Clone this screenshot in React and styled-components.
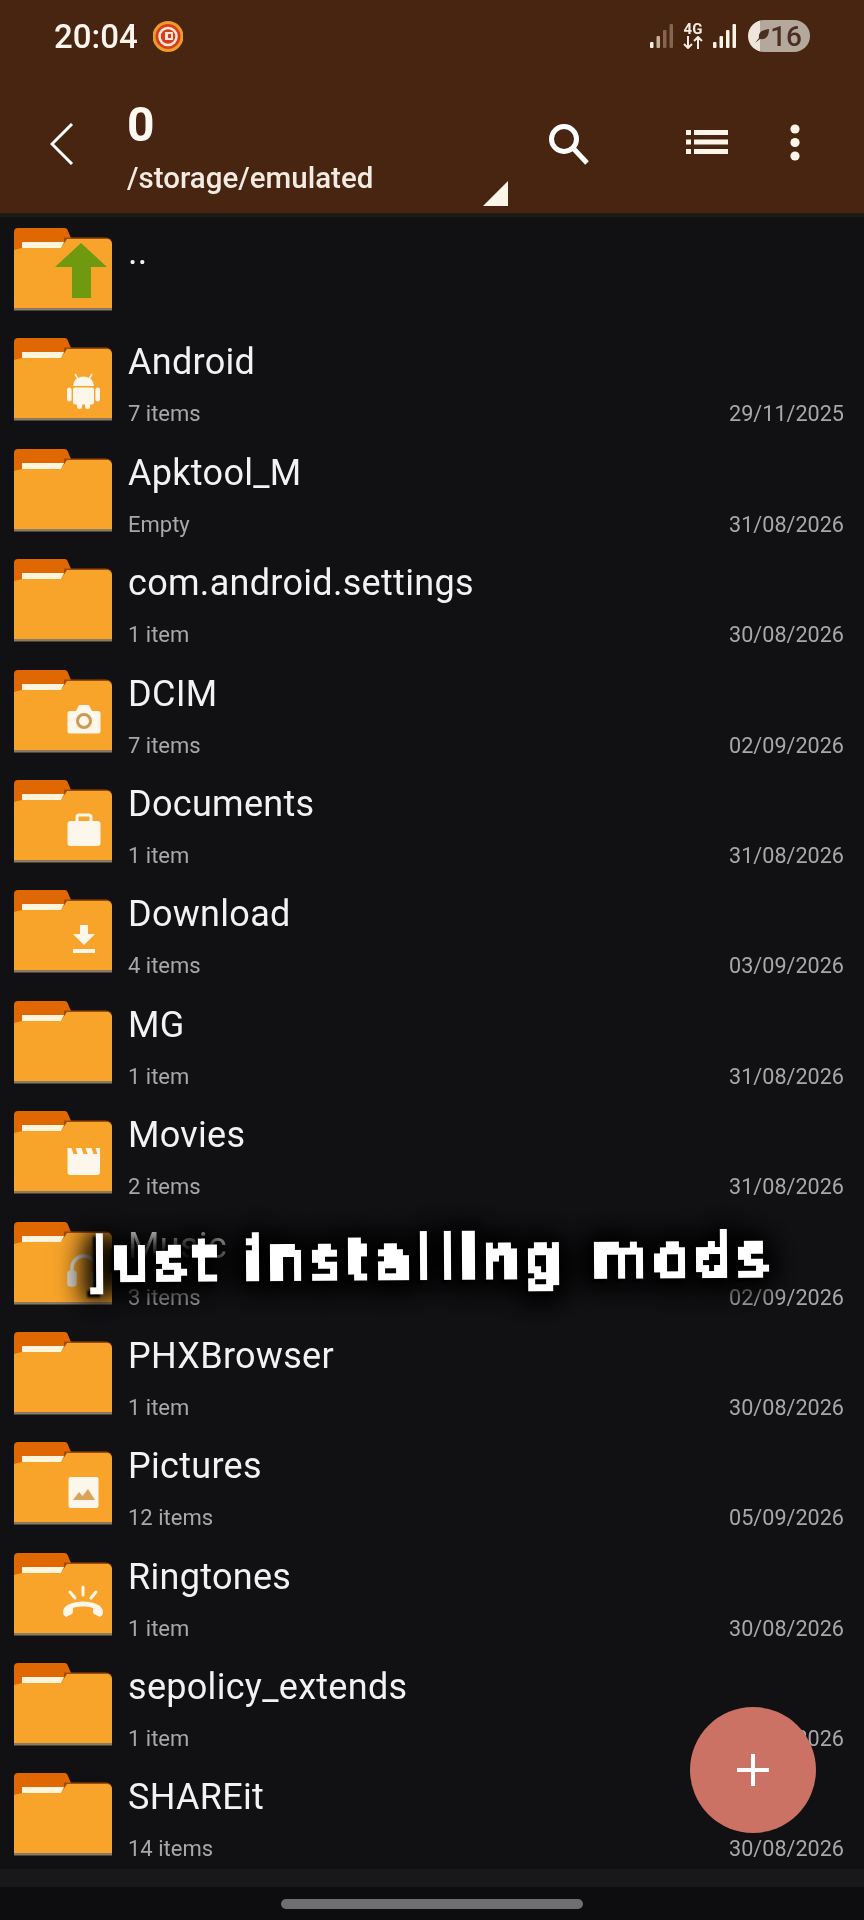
import React from "react";
import styled, { createGlobalStyle } from "styled-components";

const Global = createGlobalStyle`
  html, body { margin: 0; padding: 0; background: #111114; }
  body { font-family: Roboto, "Noto Sans", sans-serif; }
`;

const Screen = styled.div`
  position: relative;
  width: 864px;
  height: 1920px;
  overflow: hidden;
  display: flex;
  flex-direction: column;
  background: #111114;
  filter: blur(0.4px);
`;

const Header = styled.header`
  height: 213px;
  flex: none;
  background: #472511;
  color: #fff;
  display: flex;
  flex-direction: column;
  border-bottom: 4px solid #1d1a1a;
`;

const StatusBar = styled.div`
  height: 76px;
  display: flex;
  align-items: center;
  justify-content: space-between;
  padding: 0 54px 4px 54px;
  box-sizing: border-box;
`;

const StatusLeft = styled.div`
  display: flex;
  align-items: center;
  gap: 15px;
`;

const Clock = styled.span`
  font-size: 33px;
  font-weight: 500;
  color: #fbf5ee;
`;

const StatusRight = styled.div`
  display: flex;
  align-items: center;
  gap: 10px;
`;

const NetLabel = styled.div`
  width: 20px;
  display: flex;
  flex-direction: column;
  align-items: center;
  font-size: 15px;
  font-weight: 700;
  line-height: 13px;
  color: #f5ebdf;
`;

const Battery = styled.div`
  position: relative;
  width: 62px;
  height: 32px;
  border-radius: 16px;
  margin-left: 2px;
  background: linear-gradient(90deg, #efe6da 0 20%, #b4a79c 20% 100%);
  display: flex;
  align-items: center;
  justify-content: flex-end;
  gap: 1px;
  padding-right: 8px;
  box-sizing: border-box;
  color: #4b3020;
  font-size: 28px;
  font-weight: 500;
`;

const Toolbar = styled.div`
  flex: 1;
  display: flex;
  align-items: flex-start;
  position: relative;
`;

const BackSlot = styled.div`
  width: 127px;
  padding: 47px 0 0 50px;
  box-sizing: border-box;
  flex: none;
`;

const Titles = styled.div`
  flex: 1;
  display: flex;
  flex-direction: column;
`;

const Title = styled.div`
  font-size: 48px;
  font-weight: 700;
  line-height: 56px;
  margin-top: 21px;
  color: #fdf8f2;
`;

const Path = styled.div`
  font-size: 29.5px;
  font-weight: 500;
  line-height: 34px;
  margin-top: 8px;
  color: #f3ebe2;
`;

const Corner = styled.svg`
  position: absolute;
  left: 483px;
  top: 105px;
`;

const ActionSlot = styled.div`
  position: absolute;
  left: ${(p) => p.$left}px;
  top: ${(p) => p.$top}px;
  display: flex;
`;

const List = styled.main`
  flex: 1;
  min-height: 0;
  overflow: hidden;
  padding-top: 11px;
`;

const Row = styled.div`
  height: 110.4px;
  display: flex;
  align-items: flex-start;
  padding: 0 20px 0 14px;
  box-sizing: border-box;
`;

const FolderBox = styled.svg`
  flex: none;
  width: 99px;
  height: 83px;
  display: block;
`;

const RowText = styled.div`
  flex: 1;
  min-width: 0;
  margin-left: 15px;
  padding-top: 2px;
  display: flex;
  flex-direction: column;
`;

const Name = styled.div`
  font-size: 36px;
  line-height: 44px;
  letter-spacing: 0.3px;
  color: #f2f2f2;
`;

const Meta = styled.div`
  margin-top: 15px;
  display: flex;
  justify-content: space-between;
  font-size: 22px;
  line-height: 30px;
  color: #a8a8a8;
`;

const DateText = styled.span`
  font-size: 21.6px;
`;

const BottomBand = styled.div`
  height: 18px;
  flex: none;
  background: #18181b;
`;

const NavBar = styled.nav`
  height: 33px;
  flex: none;
  background: #0d0d0f;
  display: flex;
  align-items: center;
  justify-content: center;
`;

const HomePill = styled.div`
  width: 302px;
  height: 10px;
  border-radius: 5px;
  background: #6f6f6f;
`;

const Fab = styled.button`
  position: absolute;
  left: 690px;
  top: 1707px;
  width: 126px;
  height: 126px;
  padding: 0;
  border: 0;
  border-radius: 50%;
  background: #cc7265;
  display: flex;
  align-items: center;
  justify-content: center;
`;

const Caption = styled.div`
  position: absolute;
  left: 84px;
  top: 1213px;
  white-space: nowrap;
  font-family: "DejaVu Sans", sans-serif;
  font-weight: 400;
  font-size: 56px;
  letter-spacing: 6.8px;
  line-height: 84px;
  color: #fff;
  transform: rotate(-0.4deg);
  filter: drop-shadow(0 0 16px #000) drop-shadow(0 0 10px #000) drop-shadow(-3px 3px 1px #000);
`;

const CaptionInner = styled.span`
  filter: url(#pixelate);
  display: inline-block;
  padding: 4px 8px;
  -webkit-text-stroke: 3px #fff;
`;

const W = "#fdf6ea";

const badges = {
  up: <path d="M67 15 L93 39 H77 V70 H58 V39 H41 Z" fill="#6f9a10" />,
  android: (
    <g fill={W}>
      <path d="M59 48 a10.5 9.5 0 0 1 21 0 Z" />
      <path d="M61 36 l3 5 M78 36 l-3 5" stroke={W} strokeWidth="1.5" />
      <rect x="59" y="49.5" width="21" height="17" rx="2" />
      <rect x="53" y="49.5" width="4.6" height="14" rx="2.3" />
      <rect x="81.4" y="49.5" width="4.6" height="14" rx="2.3" />
      <rect x="63" y="62" width="5" height="9" rx="2.5" />
      <rect x="71" y="62" width="5" height="9" rx="2.5" />
    </g>
  ),
  camera: (
    <g>
      <path fill={W} d="M56 41 H62 L65 35 H75 L78 41 H84 a2.5 2.5 0 0 1 2.5 2.5 V61 a2.5 2.5 0 0 1 -2.5 2.5 H56 a2.5 2.5 0 0 1 -2.5 -2.5 V43.5 A2.5 2.5 0 0 1 56 41 Z" />
      <circle cx="70" cy="51" r="6.5" fill="none" stroke="#c89a55" strokeWidth="3" />
    </g>
  ),
  work: (
    <g>
      <rect x="53.5" y="41" width="33" height="25" rx="3" fill={W} />
      <path d="M63 41 V37 a2 2 0 0 1 2 -2 H75 a2 2 0 0 1 2 2 V41" fill="none" stroke={W} strokeWidth="3" />
    </g>
  ),
  download: (
    <g fill={W}>
      <path d="M66 35 H74 V44 H81 L70 55 L59 44 H66 Z" />
      <rect x="59" y="59" width="22" height="4" />
    </g>
  ),
  movie: (
    <path
      fill={W}
      d="M53.5 37 h4 l2 6 h4 l-2 -6 h6 l2 6 h4 l-2 -6 h6 l2 6 h4 l-2 -6 h4.5 V61 a3 3 0 0 1 -3 3 H56.5 a3 3 0 0 1 -3 -3 Z"
    />
  ),
  music: (
    <g fill="none" stroke="#e0ddd4" strokeWidth="3.5">
      <path d="M58 56 V46 a12 12 0 0 1 24 0 V56" />
      <rect x="55" y="50" width="6" height="13" rx="2" fill="#e0ddd4" />
      <rect x="79" y="50" width="6" height="13" rx="2" fill="#e0ddd4" />
    </g>
  ),
  picture: (
    <g>
      <rect x="54.5" y="35" width="30" height="31" rx="2" fill={W} />
      <path d="M59 58 L65 50 L68.5 54 L74 47 L81 58 Z" fill="#d9a35a" />
    </g>
  ),
  ringtone: (
    <g>
      <path fill={W} d="M49 59 c0 -14 40 -14 40 0 c0 2 -1 4 -3 5 l-6 -3 c-1 -1 -1 -2 -1 -6 c-6 -2 -14 -2 -20 0 c0 4 0 5 -1 6 l-6 3 c-2 -1 -3 -3 -3 -5 Z" />
      <path d="M69 34 V42 M56 39 L61 45 M82 39 L77 45" stroke={W} strokeWidth="3" strokeLinecap="round" />
    </g>
  ),
};

const Folder = ({ badge }) => (
  <FolderBox viewBox="0 0 99 83">
    <path d="M0 4 a4 4 0 0 1 4 -4 H50 a4 4 0 0 1 4 3 L57 10 H62 V26 H0 Z" fill="#e06803" />
    <path d="M50 9.5 H92 a6 6 0 0 1 6 6 V20 H50 Z" fill="#a14b0a" />
    <path d="M0 22 L8 20 H47 L53 11 H93 a5 5 0 0 1 5 5 V80 H0 Z" fill="#f8a42a" />
    <path d="M8 14 H50 L47 20 H8 Z" fill="#fff4dc" />
    <rect y="80" width="98" height="2.5" fill="#8b7a63" />
    {badge && badges[badge]}
  </FolderBox>
);

const rows = [
  { name: "..", badge: "up" },
  { name: "Android", sub: "7 items", date: "29/11/2025", badge: "android" },
  { name: "Apktool_M", sub: "Empty", date: "31/08/2026" },
  { name: "com.android.settings", sub: "1 item", date: "30/08/2026" },
  { name: "DCIM", sub: "7 items", date: "02/09/2026", badge: "camera" },
  { name: "Documents", sub: "1 item", date: "31/08/2026", badge: "work" },
  { name: "Download", sub: "4 items", date: "03/09/2026", badge: "download" },
  { name: "MG", sub: "1 item", date: "31/08/2026" },
  { name: "Movies", sub: "2 items", date: "31/08/2026", badge: "movie" },
  { name: "Music", sub: "3 items", date: "02/09/2026", badge: "music" },
  { name: "PHXBrowser", sub: "1 item", date: "30/08/2026" },
  { name: "Pictures", sub: "12 items", date: "05/09/2026", badge: "picture" },
  { name: "Ringtones", sub: "1 item", date: "30/08/2026", badge: "ringtone" },
  { name: "sepolicy_extends", sub: "1 item", date: "30/08/2026" },
  { name: "SHAREit", sub: "14 items", date: "30/08/2026" },
];

const Bars = ({ dim }) => (
  <svg width="23" height="24" viewBox="0 0 23 24">
    <rect x="0" y="18" width="3.5" height="6" rx="1" fill="#fbf3e8" />
    <rect x="6.5" y="12" width="3.5" height="12" rx="1" fill={dim ? "#c4b09a" : "#fbf3e8"} />
    <rect x="13" y="6" width="3.5" height="18" rx="1" fill={dim ? "#84654f" : "#fbf3e8"} />
    <rect x="19.5" y="0" width="3.5" height="24" rx="1" fill={dim ? "#84654f" : "#fbf3e8"} />
  </svg>
);

export default function App() {
  return (
    <Screen>
      <Global />
      <svg width="0" height="0" style={{ position: "absolute" }}>
        <filter id="pixelate" x="0" y="0" width="100%" height="100%" colorInterpolationFilters="sRGB">
          <feFlood x="3" y="3" width="1" height="1" floodColor="#fff" />
          <feComposite width="6" height="6" />
          <feTile result="grid" />
          <feComposite in="SourceGraphic" in2="grid" operator="in" />
          <feMorphology operator="dilate" radius="3" />
          <feComponentTransfer>
            <feFuncA type="discrete" tableValues="0 1 1 1" />
          </feComponentTransfer>
        </filter>
      </svg>
      <Header>
        <StatusBar>
          <StatusLeft>
            <Clock>20:04</Clock>
            <svg width="30" height="31" viewBox="0 0 30 31">
              <circle cx="15" cy="15.5" r="14" fill="#d4401c" stroke="#ee9a2c" strokeWidth="3" />
              <circle cx="15" cy="15.5" r="8.5" fill="none" stroke="#fbe6d8" strokeWidth="2.5" />
              <path d="M12 11 H20 V19 H12 Z M15 13 v4 h3 v-4 Z" fill="#fbe6d8" fillRule="evenodd" />
            </svg>
          </StatusLeft>
          <StatusRight>
            <Bars dim />
            <NetLabel>
              4G
              <svg width="20" height="13" viewBox="0 0 20 13" fill="none" stroke="#f5ebdf" strokeWidth="2">
                <path d="M5 0 V12 M1 8 L5 12 L9 8 M15 13 V1 M11 5 L15 1 L19 5" />
              </svg>
            </NetLabel>
            <Bars />
            <Battery>
              <svg width="16" height="16" viewBox="0 0 16 16" style={{ position: "absolute", left: 6, top: 8 }}>
                <path d="M1 15 L5 10 C4 4 9 2 15 1 C15 8 12 12 6 11 Z" fill="#4b3020" />
              </svg>
              16
            </Battery>
          </StatusRight>
        </StatusBar>
        <Toolbar>
          <BackSlot>
            <svg width="24" height="42" viewBox="0 0 24 42" fill="none" stroke="#fff" strokeWidth="3">
              <path d="M22 1 L2 21 L22 41" />
            </svg>
          </BackSlot>
          <Titles>
            <Title>0</Title>
            <Path>/storage/emulated</Path>
          </Titles>
          <ActionSlot $left={548} $top={47}>
            <svg width="42" height="42" viewBox="0 0 42 42" fill="none" stroke="#fff" strokeWidth="5">
              <circle cx="16" cy="16" r="12.5" />
              <path d="M25 25 L39 40" />
            </svg>
          </ActionSlot>
          <ActionSlot $left={686} $top={54}>
            <svg width="42" height="24" viewBox="0 0 42 24" fill="#fdf5ea">
              <rect x="0" y="0" width="5" height="5" />
              <rect x="0" y="9.5" width="5" height="5" />
              <rect x="0" y="19" width="5" height="5" />
              <rect x="8" y="0" width="34" height="5" />
              <rect x="8" y="9.5" width="34" height="5" />
              <rect x="8" y="19" width="34" height="5" />
            </svg>
          </ActionSlot>
          <ActionSlot $left={790} $top={48}>
            <svg width="10" height="37" viewBox="0 0 10 37" fill="#fdf5ea">
              <circle cx="5" cy="5" r="4.6" />
              <circle cx="5" cy="18.5" r="4.6" />
              <circle cx="5" cy="32" r="4.6" />
            </svg>
          </ActionSlot>
          <Corner width="25" height="25" viewBox="0 0 25 25">
            <path d="M25 0 V25 H0 Z" fill="#fdf5ea" />
          </Corner>
        </Toolbar>
      </Header>
      <List>
        {rows.map((r) => (
          <Row key={r.name}>
            <Folder badge={r.badge} />
            <RowText>
              <Name>{r.name}</Name>
              {r.sub && (
                <Meta>
                  <span>{r.sub}</span>
                  <DateText>{r.date}</DateText>
                </Meta>
              )}
            </RowText>
          </Row>
        ))}
      </List>
      <BottomBand />
      <NavBar>
        <HomePill />
      </NavBar>
      <Fab aria-label="add">
        <svg width="32" height="32" viewBox="0 0 32 32" fill="#fff">
          <rect x="14" y="0" width="4" height="32" />
          <rect x="0" y="14" width="32" height="4" />
        </svg>
      </Fab>
      <Caption>
        <CaptionInner>just installing mods</CaptionInner>
      </Caption>
    </Screen>
  );
}
